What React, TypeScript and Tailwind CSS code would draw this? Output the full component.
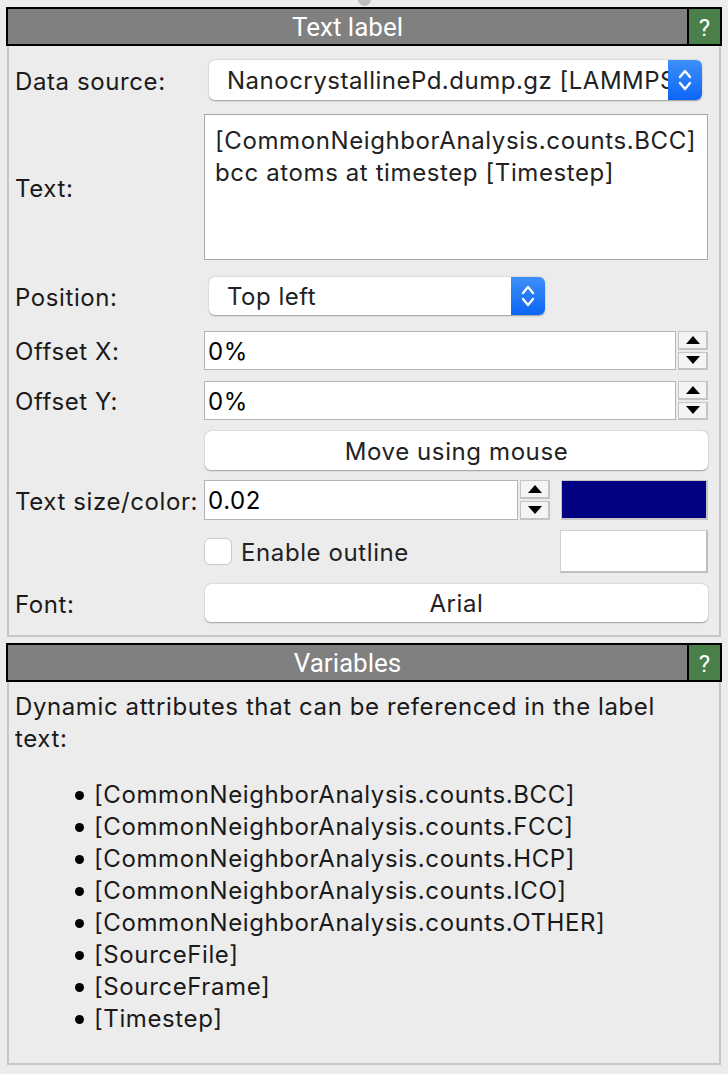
import React from "react";

const font = { fontFamily: "Inter, 'Noto Sans', sans-serif" };

function Header({ title }: { title: string }) {
  return (
    <div className="mx-[6px] flex h-[39px] border-2 border-black bg-[#808080]">
      <div
        className="flex flex-1 items-center justify-center pt-[2px] text-[26px] text-white"
        style={{ fontFamily: "Roboto, sans-serif" }}
      >
        {title}
      </div>
      <div
        className="flex w-[33px] items-center justify-center border-l-2 border-black bg-[#4b7f4a] pt-[2px] text-[24px] text-white"
        style={{ fontFamily: "Roboto, sans-serif" }}
      >
        ?
      </div>
    </div>
  );
}

function Combo({ text, width }: { text: string; width: string }) {
  return (
    <div
      className={`ml-[5px] flex h-full overflow-hidden rounded-[6px] bg-white shadow-[0_0.5px_1.5px_rgba(0,0,0,0.35)] ${width}`}
    >
      <div className="flex flex-1 items-center overflow-hidden whitespace-nowrap pl-[18px] pt-[2px] text-[24px] tracking-[0.5px] text-[#222]">
        {text}
      </div>
      <div className="flex w-[34px] items-center justify-center bg-gradient-to-b from-[#3d8ff8] to-[#0865f6]">
        <svg width="16" height="26" viewBox="0 0 16 26" fill="none" stroke="white" strokeWidth="2.4" strokeLinecap="round" strokeLinejoin="round">
          <path d="M3 10 L8 4 L13 10" />
          <path d="M3 16 L8 22 L13 16" />
        </svg>
      </div>
    </div>
  );
}

function Spinner() {
  return (
    <div className="ml-[2px] flex h-full w-[30px] flex-col gap-[2px]">
      {[0, 1].map((i) => (
        <div
          key={i}
          className="flex flex-1 items-center justify-center border border-[#c4c4c4] border-b-2 border-r-2 bg-[#f4f4f4]"
        >
          <svg width="14" height="8" viewBox="0 0 14 8">
            {i === 0 ? <path d="M0 8 L7 0 L14 8 Z" fill="black" /> : <path d="M0 0 L7 8 L14 0 Z" fill="black" />}
          </svg>
        </div>
      ))}
    </div>
  );
}

function Input({ value }: { value: string }) {
  return (
    <div className="flex h-full flex-1 items-center border border-[#b4b4b4] bg-white pl-[3px] pt-[2px] text-[24px] tracking-[0.6px] text-black">
      {value}
    </div>
  );
}

function PushButton({ label }: { label: string }) {
  return (
    <div className="ml-[1px] flex h-full flex-1 items-center justify-center rounded-[6px] bg-white pt-[2px] text-[24px] tracking-[0.6px] text-[#222] shadow-[0_0.5px_1.5px_rgba(0,0,0,0.35)]">
      {label}
    </div>
  );
}

function Row({ label, className, children }: { label?: string; className: string; children: React.ReactNode }) {
  return (
    <div className={`flex items-center ${className}`}>
      <div className="w-[189px] shrink-0 whitespace-nowrap pt-[3px] text-[24px] tracking-[0.6px] text-[#1a1a1a]">{label}</div>
      <div className="flex h-full flex-1 items-center">{children}</div>
    </div>
  );
}

const vars = [
  "[CommonNeighborAnalysis.counts.BCC]",
  "[CommonNeighborAnalysis.counts.FCC]",
  "[CommonNeighborAnalysis.counts.HCP]",
  "[CommonNeighborAnalysis.counts.ICO]",
  "[CommonNeighborAnalysis.counts.OTHER]",
  "[SourceFile]",
  "[SourceFrame]",
  "[Timestep]",
];

export default function App() {
  return (
    <div className="relative h-[1074px] w-[728px] overflow-hidden bg-[#ececec] pt-[7px]" style={font}>
      {/* splitter handle */}
      <div className="absolute left-[358px] top-[-7px] h-[13px] w-[13px] rounded-full bg-[#bdbdbd]" />

      <Header title="Text label" />
      <div className="mx-[7px] flex flex-col border-2 border-t-0 border-[#c6c6c6] pb-[13px] pl-[6px] pr-[11px]">
        <Row label="Data source:" className="mt-[14px] h-[40px]">
          <Combo text="NanocrystallinePd.dump.gz [LAMMPS Dump File]" width="w-[493px]" />
        </Row>
        <Row label="Text:" className="mt-[14px] h-[146px]">
          <div className="h-full flex-1 border border-[#a8a8a8] bg-white pl-[10px] pt-[10px] text-[24px] leading-[32px] tracking-[0.6px] text-[#222]">
            [CommonNeighborAnalysis.counts.BCC]
            <br />
            bcc atoms at timestep [Timestep]
          </div>
        </Row>
        <Row label="Position:" className="mt-[17px] h-[38px]">
          <Combo text="Top left" width="w-[336px]" />
        </Row>
        <Row label="Offset X:" className="mt-[16px] h-[39px]">
          <Input value="0%" />
          <Spinner />
        </Row>
        <Row label="Offset Y:" className="mt-[11px] h-[39px]">
          <Input value="0%" />
          <Spinner />
        </Row>
        <Row className="mt-[11px] h-[39px]">
          <PushButton label="Move using mouse" />
        </Row>
        <Row label="Text size/color:" className="mt-[10px] h-[40px]">
          <div className="flex h-full w-[346px] items-center">
            <Input value="0.02" />
            <Spinner />
          </div>
          <div className="ml-[11px] h-full flex-1 border border-[#c4c4c4] border-b-2 border-r-2 bg-[#000080]" />
        </Row>
        <Row className="mt-[10px] h-[43px]">
          <div className="flex h-full w-[356px] items-center">
            <div className="h-[27px] w-[28px] rounded-[6px] border border-[#c9c9c9] bg-white" />
            <span className="ml-[9px] pt-[3px] text-[24px] tracking-[0.6px] text-[#222]">Enable outline</span>
          </div>
          <div className="h-full flex-1 border border-[#d0d0d0] border-b-2 border-r-2 border-b-[#c0c0c0] border-r-[#c0c0c0] bg-white" />
        </Row>
        <Row label="Font:" className="mt-[11px] h-[38px]">
          <PushButton label="Arial" />
        </Row>
      </div>

      <div className="mt-[6px]">
        <Header title="Variables" />
      </div>
      <div className="mx-[7px] border-2 border-t-0 border-[#c6c6c6] pb-[28px] pl-[6px] pr-[11px] pt-[9px] text-[24px] leading-[32px] tracking-[0.6px] text-[#1a1a1a]">
        <p className="w-[680px]">Dynamic attributes that can be referenced in the label text:</p>
        <ul className="mt-[24px]">
          {vars.map((v) => (
            <li key={v} className="flex items-center">
              <span className="ml-[60px] mr-[10px] h-[9px] w-[9px] rounded-full bg-black" />
              {v}
            </li>
          ))}
        </ul>
      </div>
    </div>
  );
}
